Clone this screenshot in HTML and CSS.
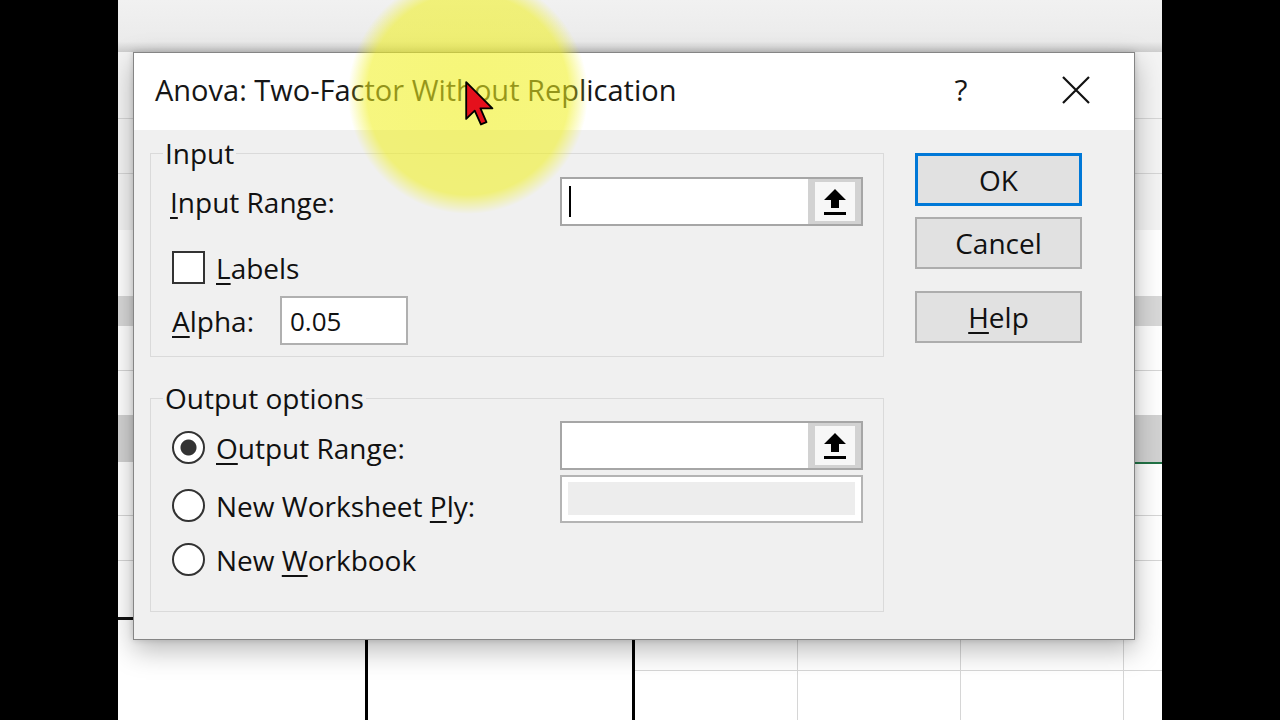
FILE: index.html
```html
<!DOCTYPE html>
<html lang="en">
  <head>
    <meta charset="UTF-8" />
    <meta name="viewport" content="width=device-width, initial-scale=1.0" />
    <title>Anova: Two-Factor Without Replication</title>
    <link rel="stylesheet" href="styles.css">
  </head>
  <body>
    <div class="screen">
      <div class="side"></div>

      <div class="sheet">
        <div class="ribbon"></div>
        <div class="cells"></div>

        <section class="dialog">
          <header class="titlebar">
            <h1 class="title">Anova: Two-Factor Without Replication</h1>
            <span class="help-glyph">?</span>
            <svg class="close" width="28" height="28" viewBox="0 0 28 28">
              <path d="M1 1 L27 27 M27 1 L1 27" stroke="#111" stroke-width="2.2" fill="none" />
            </svg>
          </header>

          <div class="dialog-body">
            <div class="groups">
              <fieldset class="group group-input">
                <legend>Input</legend>
                <div class="field-row">
                  <label><u>I</u>nput Range:</label>
                  <div class="ref-box">
                    <span class="ref-field"><span class="caret"></span></span>
                    <span class="ref-btn">
                      <span class="ref-face">
                        <svg width="22" height="26" viewBox="0 0 22 26">
                          <path d="M11 0 L22 11 H15 V19 H7 V11 H0 Z" fill="#000" />
                          <rect x="0" y="23" width="22" height="3" fill="#000" />
                        </svg>
                      </span>
                    </span>
                  </div>
                </div>
                <div class="check-row">
                  <span class="checkbox"></span>
                  <label><u>L</u>abels</label>
                </div>
                <div class="alpha-row">
                  <label class="alpha-label"><u>A</u>lpha:</label>
                  <span class="text-field">0.05</span>
                </div>
              </fieldset>

              <fieldset class="group group-output">
                <legend>Output options</legend>
                <div class="option-row row-first">
                  <div class="option">
                    <span class="radio checked"></span>
                    <label><u>O</u>utput Range:</label>
                  </div>
                  <div class="ref-box">
                    <span class="ref-field"></span>
                    <span class="ref-btn">
                      <span class="ref-face">
                        <svg width="22" height="26" viewBox="0 0 22 26">
                          <path d="M11 0 L22 11 H15 V19 H7 V11 H0 Z" fill="#000" />
                          <rect x="0" y="23" width="22" height="3" fill="#000" />
                        </svg>
                      </span>
                    </span>
                  </div>
                </div>
                <div class="option-row row-second">
                  <div class="option">
                    <span class="radio"></span>
                    <label>New Worksheet <u>P</u>ly:</label>
                  </div>
                  <div class="ref-box disabled">
                    <span class="ref-fill"></span>
                  </div>
                </div>
                <div class="option-row row-third">
                  <div class="option">
                    <span class="radio"></span>
                    <label>New <u>W</u>orkbook</label>
                  </div>
                </div>
              </fieldset>
            </div>

            <div class="actions">
              <button class="btn btn-default" type="button">OK</button>
              <button class="btn btn-cancel" type="button">Cancel</button>
              <button class="btn btn-help" type="button"><u>H</u>elp</button>
            </div>
          </div>
        </section>

        <div class="spotlight"></div>
        <svg class="pointer" width="30" height="46" viewBox="0 0 13 20">
          <polygon points="0.5,0.5 0.5,16.5 4.2,12.9 6.9,18.9 9.3,17.9 6.7,11.9 11.9,11.9"
            fill="#e5101c" stroke="#000" stroke-width="0.8" stroke-linejoin="round" />
        </svg>
      </div>

      <div class="side"></div>
    </div>
  </body>
</html>
```

FILE: styles.css
```css
* {
  box-sizing: border-box;
}
body {
  margin: 0;
  background: #000;
  font-family: "Open Sans", "Noto Sans", sans-serif;
  color: #111;
}
.screen {
  display: flex;
  width: 1280px;
  height: 720px;
}
.side {
  width: 118px;
  background: #000;
}

/* spreadsheet behind the dialog */
.sheet {
  position: relative;
  width: 1044px;
  height: 720px;
  overflow: hidden;
  background: #fff;
  display: flex;
  flex-direction: column;
}
.ribbon {
  height: 52px;
  background: linear-gradient(#f1f1f1, #ebebeb 80%, #cdcdcd);
}
.cells {
  flex: 1;
  background:
    linear-gradient(#000, #000) 247px 0 / 3px 100% no-repeat,
    linear-gradient(#000, #000) 514px 0 / 3px 100% no-repeat,
    linear-gradient(#d6d6d6, #d6d6d6) 679px 0 / 1px 100% no-repeat,
    linear-gradient(#d6d6d6, #d6d6d6) 842px 0 / 1px 100% no-repeat,
    linear-gradient(#d6d6d6, #d6d6d6) 1005px 0 / 1px 100% no-repeat,
    linear-gradient(#d6d6d6, #d6d6d6) 514px 618px / 530px 1px no-repeat,
    linear-gradient(#111, #111) 0 565px / 15px 3px no-repeat,
    linear-gradient(#217346, #217346) 1017px 410px / 27px 2px no-repeat,
    linear-gradient(#d8d8d8, #d8d8d8) 0 244px / 100% 30px no-repeat,
    linear-gradient(#d2d2d2, #d2d2d2) 0 363px / 100% 47px no-repeat,
    linear-gradient(#d6d6d6, #d6d6d6) 0 318px / 100% 1px no-repeat,
    linear-gradient(#d6d6d6, #d6d6d6) 0 463px / 100% 1px no-repeat,
    linear-gradient(#d6d6d6, #d6d6d6) 0 508px / 100% 1px no-repeat,
    linear-gradient(#d6d6d6, #d6d6d6) 0 66px / 100% 1px no-repeat,
    linear-gradient(#d6d6d6, #d6d6d6) 0 121px / 100% 1px no-repeat,
    linear-gradient(#f4f4f4, #f4f4f4) 0 0 / 100% 178px no-repeat,
    #fff;
}

/* dialog window */
.dialog {
  position: absolute;
  left: 15px;
  top: 52px;
  width: 1002px;
  height: 588px;
  border: 1px solid #858585;
  background: #f0f0f0;
  box-shadow: 0 10px 26px rgba(0, 0, 0, 0.28), 0 0 6px rgba(0, 0, 0, 0.15);
}
.titlebar {
  height: 77px;
  background: #fff;
  display: flex;
  align-items: center;
  padding-left: 21px;
  padding-bottom: 4px;
}
.title {
  margin: 0;
  font-size: 29px;
  font-weight: 400;
  color: #161616;
}
.help-glyph {
  margin-left: auto;
  width: 40px;
  margin-right: 81px;
  text-align: center;
  font-size: 30px;
  color: #161616;
}
.close {
  margin-right: 44px;
}

.dialog-body {
  display: flex;
  gap: 31px;
  padding: 9px 0 0 16px;
  font-size: 28px;
}
.groups {
  width: 734px;
}
.group {
  margin: 0;
  padding: 10px 20px 11px 19px;
  border: 1px solid #dadada;
  min-width: 0;
}
.group legend {
  padding: 0 2px;
  margin-left: -7px;
  font-size: 28px;
  line-height: 28px;
}
.group-output {
  margin-top: 27px;
  padding-top: 9px;
  padding-bottom: 34px;
}
label u,
.btn u {
  text-underline-offset: 4px;
}

/* input group rows */
.field-row {
  display: flex;
  align-items: center;
  justify-content: space-between;
  height: 49px;
}
.check-row {
  display: flex;
  align-items: center;
  gap: 11px;
  height: 33px;
  margin-top: 25px;
  padding-left: 2px;
}
.checkbox {
  width: 33px;
  height: 33px;
  border: 2px solid #333;
  background: #fff;
}
.alpha-row {
  display: flex;
  align-items: center;
  height: 49px;
  margin-top: 12px;
  padding-left: 2px;
}
.alpha-label {
  width: 108px;
}
.text-field {
  width: 128px;
  height: 49px;
  display: flex;
  align-items: center;
  padding-left: 8px;
  border: 2px solid #b0b0b0;
  background: #fff;
  font-size: 26px;
}

/* range reference box with collapse button */
.ref-box {
  display: flex;
  width: 303px;
  height: 49px;
  border: 2px solid #a6a6a6;
  background: #fff;
}
.ref-field {
  flex: 1;
  display: flex;
  align-items: center;
  padding-left: 7px;
}
.caret {
  width: 2px;
  height: 31px;
  background: #000;
}
.ref-btn {
  width: 53px;
  display: flex;
  align-items: center;
  justify-content: center;
  background: #d2d2d2;
}
.ref-face {
  width: 40px;
  height: 39px;
  display: flex;
  align-items: center;
  justify-content: center;
  background: #f7f7f7;
}
.ref-box.disabled {
  height: 48px;
  padding: 5px 6px 6px;
  border-color: #b4b4b4;
}
.ref-fill {
  flex: 1;
  background: #ededed;
}

/* output options rows */
.option-row {
  display: flex;
  align-items: flex-start;
  justify-content: space-between;
}
.option {
  display: flex;
  align-items: center;
  gap: 11px;
  height: 33px;
  padding-left: 2px;
}
.row-first {
  height: 49px;
}
.row-first .option {
  margin-top: 10px;
}
.row-second {
  height: 48px;
  margin-top: 5px;
}
.row-second .option {
  margin-top: 14px;
}
.row-third {
  height: 34px;
  margin-top: 20px;
}
.radio {
  width: 33px;
  height: 33px;
  border: 2px solid #333;
  border-radius: 50%;
  background: #fff;
}
.radio.checked {
  background: radial-gradient(circle, #333 0 7.5px, #fff 8.5px);
}

/* command buttons */
.actions {
  width: 167px;
  display: flex;
  flex-direction: column;
  padding-top: 14px;
}
.btn {
  width: 167px;
  height: 52px;
  padding: 0;
  border: 2px solid #adadad;
  background: #e1e1e1;
  font: inherit;
  color: #111;
}
.btn-default {
  height: 53px;
  border: 3px solid #0078d7;
}
.btn-cancel {
  margin-top: 11px;
}
.btn-help {
  margin-top: 22px;
}

/* presenter highlight and mouse pointer */
.spotlight {
  position: absolute;
  left: 230px;
  top: -26px;
  width: 240px;
  height: 240px;
  border-radius: 50%;
  background: radial-gradient(circle closest-side, rgba(240, 240, 30, 0.6) 0, rgba(240, 240, 30, 0.57) 84%, rgba(240, 240, 30, 0) 100%);
  pointer-events: none;
}
.pointer {
  position: absolute;
  left: 347px;
  top: 81px;
}
```
